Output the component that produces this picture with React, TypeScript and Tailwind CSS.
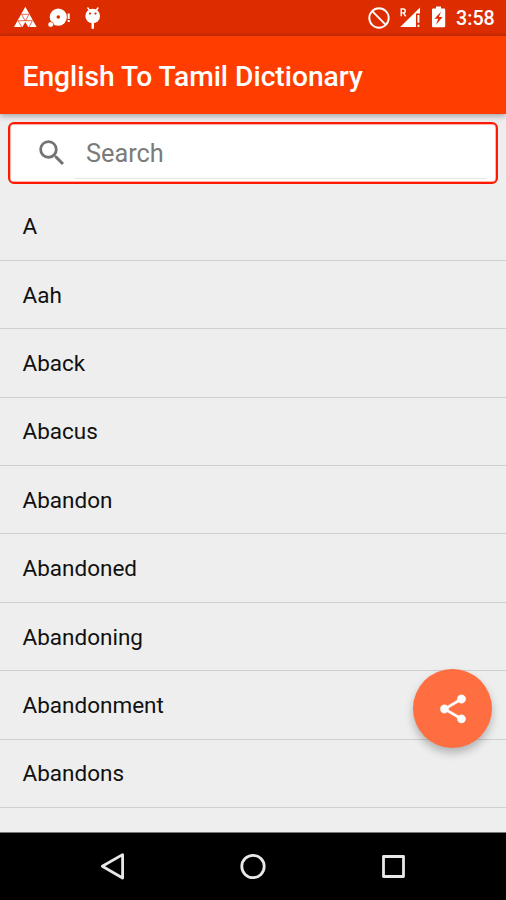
const words = ['A', 'Aah', 'Aback', 'Abacus', 'Abandon', 'Abandoned', 'Abandoning', 'Abandonment', 'Abandons'];

function StatusBar() {
  return (
    <div className="h-9 shrink-0 flex items-start justify-between bg-linear-to-b from-[#dd2c00] from-92% to-[#c82a04]">
      <svg width="110" height="35" viewBox="0 0 110 35" fill="#fff">
        <path d="M25.300 6.800L36.600 27H28.200L25.300 22L22.400 27H14Z" />
        <path d="M21.500 14.300H29.100M18 20.700H32.600M21.700 14.500L25 20.700M28.900 14.500L25.600 20.700M18.300 21L21.600 27M32.300 21L29 27" stroke="#dd2c00" strokeWidth="0.700" fill="none" />
        <circle cx="58.300" cy="17.100" r="8.600" />
        <circle cx="58.300" cy="17" r="1.800" fill="#dd2c00" />
        <circle cx="50.700" cy="24.500" r="2.800" stroke="#dd2c00" strokeWidth="0.700" />
        <path d="M67.700 13.500h2v5.400h-2zM67.700 20h2v2h-2z" />
        <circle cx="92.700" cy="16" r="7.300" />
        <path d="M87.500 7.500l3 4M98.300 7.500l-3 4" stroke="#fff" strokeWidth="1.400" />
        <rect x="91.500" y="22" width="2.500" height="7" rx="1" />
        <circle cx="90" cy="13.600" r="1.100" fill="#dd2c00" />
        <circle cx="95.500" cy="13.600" r="1.100" fill="#dd2c00" />
      </svg>
      <div className="flex">
        <svg width="92" height="35" viewBox="364 0 92 35" fill="#fff">
          <circle cx="379" cy="18" r="9.700" fill="none" stroke="#fff" strokeWidth="1.900" />
          <path d="M372.200 11.200l13.600 13.600" stroke="#fff" strokeWidth="1.900" />
          <path d="M420 7.400V13.500H416V27H400.200Z" />
          <path d="M417.500 15h1.900v7.800h-1.900zM417.500 24.700h1.900V27h-1.900z" />
          <path d="M401.200 16.300V9h2.100a1.900 1.900 0 0 1 0 3.900h-2.100M403.400 12.900l2.300 3.400" fill="none" stroke="#fff" strokeWidth="1.400" />
          <path d="M436 6.500h5v2h3.200a1 1 0 0 1 1 1V26a1.200 1.200 0 0 1-1.200 1.200h-10.800a1.200 1.200 0 0 1-1.200-1.200V9.500a1 1 0 0 1 1-1h3z" />
          <path d="M441 11.800l-6.600 7h3.800l-2.200 6 6.600-7.800h-3.700z" fill="#dd2c00" />
        </svg>
        <span className="w-[50px] pt-[5px] text-[19.700px] leading-[28px] font-medium text-white">3:58</span>
      </div>
    </div>
  );
}

export default function App() {
  return (
    <div className="relative w-[506px] h-[900px] overflow-hidden flex flex-col bg-[#eeeeee] font-[Roboto,sans-serif]">
      <StatusBar />
      <header className="z-10 h-[78px] shrink-0 bg-[#ff3d00] px-[22.500px] flex items-center shadow-[0_2px_6px_rgba(0,0,0,0.32)]">
        <h1 className="pt-[3px] text-[28.200px] leading-8 font-medium text-white whitespace-nowrap">English To Tamil Dictionary</h1>
      </header>
      <div className="mx-2 mt-2 h-[62px] shrink-0 rounded-md border-[2.500px] border-[#ff1800] bg-white flex items-center pl-[25px] pr-[9px] shadow-[inset_0_0_0_0.500px_#ff6a50]">
        <svg className="shrink-0" width="34" height="34" viewBox="0 0 24 24" fill="#737373">
          <path d="M15.500 14h-.79l-.28-.27A6.471 6.471 0 0 0 16 9.500 6.500 6.500 0 1 0 9.500 16c1.610 0 3.090-.59 4.230-1.570l.27.28v.79l5 4.990L20.490 19l-4.990-5zm-6 0C7.010 14 5 11.990 5 9.500S7.010 5 9.500 5 14 7.010 14 9.500 11.990 14 9.500 14z" />
        </svg>
        <div className="ml-[6px] h-[54px] mb-[3px] flex-1 border-b border-[#e6e6e6] pl-[11px] pt-[6px] flex items-center text-[25.300px] text-[#7b7b7b]">Search</div>
      </div>
      <ul className="mt-[8.500px] flex-1 min-h-0 overflow-hidden">
        {words.map((word) => (
          <li key={word} className="h-[68.400px] border-b border-[#cfcfcf] px-[22.500px] pt-[2px] flex items-center text-[22.500px] text-[#111]">{word}</li>
        ))}
      </ul>
      <nav className="h-[68px] shrink-0 bg-black border-t border-[#777] flex justify-center">
        <svg width="340" height="67" viewBox="83 833 340 67" fill="none" stroke="#e8e8e8" strokeWidth="2.800" strokeLinejoin="round">
          <path d="M122.600 854.600V878L102.300 866.300Z" />
          <circle cx="253" cy="866.500" r="11.200" />
          <rect x="383.500" y="856.500" width="20" height="20" />
        </svg>
      </nav>
      <button aria-label="Share" className="absolute z-20 left-[413px] top-[669px] size-[79px] rounded-full bg-[#ff6e40] flex items-center justify-center shadow-[0_5px_9px_rgba(0,0,0,0.25)]">
        <svg width="34" height="34" viewBox="0 0 24 24" fill="#fff" stroke="#fff" strokeWidth="0.250">
          <path d="M18 16.080c-.76 0-1.440.3-1.960.77L8.910 12.700c.05-.23.09-.46.09-.7s-.04-.47-.09-.7l7.050-4.110c.54.5 1.250.81 2.040.81 1.660 0 3-1.340 3-3s-1.340-3-3-3-3 1.340-3 3c0 .24.04.47.09.7L8.040 9.810C7.500 9.310 6.790 9 6 9c-1.660 0-3 1.340-3 3s1.340 3 3 3c.79 0 1.500-.31 2.040-.81l7.120 4.160c-.05.21-.08.43-.08.65 0 1.610 1.310 2.920 2.920 2.920s2.920-1.310 2.920-2.920-1.310-2.920-2.920-2.920z" />
        </svg>
      </button>
    </div>
  );
}
